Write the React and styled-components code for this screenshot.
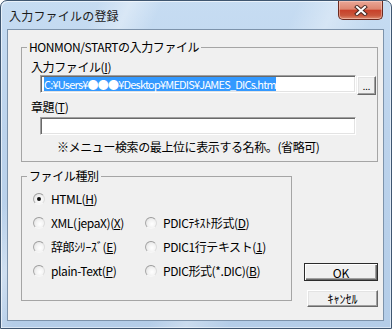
import React from 'react';
import styled, { createGlobalStyle, css } from 'styled-components';

const Global = createGlobalStyle`
  html, body { margin: 0; padding: 0; background: #ffffff; }
  body {
    width: 392px; height: 329px; overflow: hidden;
    font-family: "Noto Sans CJK JP", "Noto Sans", sans-serif;
    font-size: 12px; color: #000;
  }
`;

const Window = styled.div`
  box-sizing: border-box;
  width: 392px;
  height: 329px;
  display: flex;
  flex-direction: column;
  border: 1px solid #3f5670;
  border-radius: 7px 7px 0 0;
  background:
    linear-gradient(115deg, rgba(255,255,255,0) 18%, rgba(255,255,255,0.35) 24%, rgba(255,255,255,0) 30%, rgba(255,255,255,0) 55%, rgba(255,255,255,0.3) 62%, rgba(255,255,255,0) 70%),
    linear-gradient(180deg, #c6dcf2 0%, #bcd3ec 40%, #b4cde8 100%);
  padding: 0 7px 7px 6px;
  box-shadow: inset 1px 1px 0 rgba(255,255,255,0.6), inset -1px -1px 0 rgba(255,255,255,0.5);
`;

const TitleBar = styled.div`
  height: 28px;
  display: flex;
  justify-content: space-between;
  align-items: flex-start;
  flex: none;
`;

const Title = styled.div`
  padding-left: 2px;
  font-size: 12px;
  line-height: 29px;
  color: #1b1b1b;
  letter-spacing: 0.2px;
`;

const CloseButton = styled.div`
  box-sizing: border-box;
  width: 45px;
  height: 19px;
  margin-right: 1px;
  display: flex;
  align-items: center;
  justify-content: center;
  border: 1px solid #6b2a1f;
  border-top: none;
  border-radius: 0 0 5px 5px;
  background: linear-gradient(180deg, #eaa797 0%, #de8670 45%, #c8412a 52%, #c9563c 80%, #de8c70 100%);
  box-shadow: inset 0 0 0 1px rgba(255,220,210,0.45);
`;

const Client = styled.div`
  flex: 1;
  box-sizing: border-box;
  background: #f0f0f0;
  border: 1px solid #7d93ab;
  padding: 10px 5px 0 13px;
  display: flex;
  flex-direction: column;
  letter-spacing: -0.4px;
`;

const Group = styled.fieldset`
  box-sizing: border-box;
  margin: 0;
  padding: 0;
  min-width: 0;
  width: ${p => p.$w}px;
  border: 1px solid #a5a5a5;
`;

const Legend = styled.legend`
  margin-left: 5px;
  padding: 0 2px;
  font-size: 12px;
  line-height: 14px;
  color: #000;
`;

const FileBody = styled.div`
  padding: 6px 0 7px 0;
  display: flex;
  flex-direction: column;
  align-items: flex-start;
`;

const Label = styled.div`
  margin-left: 9px;
  margin-top: ${p => p.$mt || 0}px;
  line-height: 14px;
  white-space: nowrap;
`;

const FieldRow = styled.div`
  display: flex;
  align-items: flex-start;
  margin: 1px 0 0 18px;
`;

const TextField = styled.div`
  box-sizing: border-box;
  width: 316px;
  height: 18px;
  margin-top: ${p => p.$mt || 0}px;
  margin-left: ${p => p.$ml || 0}px;
  background: #fff;
  border-style: solid;
  border-width: 1px;
  border-color: #a0a0a0 #ffffff #ffffff #a0a0a0;
  box-shadow: inset 1px 1px 0 #696969, inset -1px -1px 0 #e3e3e3;
  padding: 1px 2px 0 3px;
  display: flex;
  align-items: flex-start;
  overflow: hidden;
  white-space: nowrap;
`;

const Selected = styled.span`
  display: inline-block;
  background: #3399ff;
  color: #fff;
  font-size: 11px;
  line-height: 14px;
  height: 14px;
  letter-spacing: -0.8px;
`;

const Bevel = css`
  box-sizing: border-box;
  margin: 0;
  padding: 0;
  background: #f0f0f0;
  font-family: "Noto Sans CJK JP", "Noto Sans", sans-serif;
  font-size: 12px;
  color: #000;
  border: 1px solid;
  border-color: #ffffff #696969 #696969 #ffffff;
  box-shadow: inset -1px -1px 0 #a0a0a0, inset 1px 1px 0 #e3e3e3;
  display: flex;
  align-items: center;
  justify-content: center;
`;

const BrowseButton = styled.button`
  ${Bevel}
  width: 19px;
  height: 19px;
  margin: 1px 0 0 1px;
  align-items: flex-end;
  padding-bottom: 3px;
  font-size: 9px;
  line-height: 9px;
`;

const Note = styled.div`
  margin: 5px 0 0 35px;
  line-height: 14px;
  white-space: nowrap;
`;

const BottomRow = styled.div`
  display: flex;
  align-items: flex-start;
  margin-top: 7px;
`;

const TypeGrid = styled.div`
  display: grid;
  grid-template-columns: 112px 1fr;
  grid-template-rows: repeat(4, 24px);
  grid-auto-flow: column;
  padding: 4px 0 17px 11px;
`;

const RadioItem = styled.div`
  display: flex;
  align-items: center;
  gap: 6px;
  white-space: nowrap;
  line-height: 14px;
`;

const RadioCircle = styled.span`
  box-sizing: border-box;
  width: 12px;
  height: 12px;
  flex: none;
  border-radius: 50%;
  border: 1px solid;
  border-color: #9a9a9a #dcdcdc #f6f6f6 #a8a8a8;
  background: radial-gradient(circle at 60% 60%, #ffffff 0%, #f3f3f3 45%, #dadada 100%);
  display: flex;
  align-items: center;
  justify-content: center;
  &::after {
    content: "";
    width: 4px;
    height: 4px;
    border-radius: 50%;
    background: #111;
    display: ${p => (p.$checked ? 'block' : 'none')};
  }
`;

const Spacer = styled.div``;

const ButtonColumn = styled.div`
  display: flex;
  flex-direction: column;
  align-items: flex-end;
  padding-top: 94px;
  margin-left: 12px;
`;

const PushButton = styled.button`
  ${Bevel}
  width: ${p => p.$w}px;
  height: ${p => p.$h}px;
  margin-top: ${p => p.$mt || 0}px;
  ${p => p.$default && css`
    border-color: #2b2b2b;
    box-shadow: inset 1px 1px 0 #ffffff, inset -1px -1px 0 #696969, inset -2px -2px 0 #a0a0a0;
  `}
`;

const Radio = ({ checked, children }) => (
  <RadioItem>
    <RadioCircle $checked={checked} />
    <span>{children}</span>
  </RadioItem>
);

export default function App() {
  return (
    <>
      <Global />
      <Window>
        <TitleBar>
          <Title>入力ファイルの登録</Title>
          <CloseButton>
            <svg width="14" height="11" viewBox="0 0 14 11">
              <path d="M3 2 L11 9 M11 2 L3 9" stroke="#4a2a24" strokeWidth="4" strokeLinecap="square" />
              <path d="M3 2 L11 9 M11 2 L3 9" stroke="#ffffff" strokeWidth="2" strokeLinecap="square" />
            </svg>
          </CloseButton>
        </TitleBar>
        <Client>
          <Group $w={357}>
            <Legend>HONMON/STARTの入力ファイル</Legend>
            <FileBody>
              <Label>入力ファイル(<u>I</u>)</Label>
              <FieldRow>
                <TextField>
                  <Selected>C:¥Users¥●●●¥Desktop¥MEDIS¥JAMES_DICs.htm</Selected>
                </TextField>
                <BrowseButton>...</BrowseButton>
              </FieldRow>
              <Label $mt={5}>章題(<u>T</u>)</Label>
              <TextField $mt={3} $ml={18} />
              <Note>※メニュー検索の最上位に表示する名称。(省略可)</Note>
            </FileBody>
          </Group>
          <BottomRow>
            <Group $w={274}>
              <Legend>ファイル種別</Legend>
              <TypeGrid>
                <Radio checked>HTML(<u>H</u>)</Radio>
                <Radio>XML(jepaX)(<u>X</u>)</Radio>
                <Radio>辞郎ｼﾘｰｽﾞ(<u>E</u>)</Radio>
                <Radio>plain-Text(<u>P</u>)</Radio>
                <Spacer />
                <Radio>PDICﾃｷｽﾄ形式(<u>D</u>)</Radio>
                <Radio>PDIC1行テキスト(<u>1</u>)</Radio>
                <Radio>PDIC形式(*.DIC)(<u>B</u>)</Radio>
              </TypeGrid>
            </Group>
            <ButtonColumn>
              <PushButton $default $w={74} $h={18}>OK</PushButton>
              <PushButton $w={71} $h={17} $mt={9}>ｷｬﾝｾﾙ</PushButton>
            </ButtonColumn>
          </BottomRow>
        </Client>
      </Window>
    </>
  );
}
